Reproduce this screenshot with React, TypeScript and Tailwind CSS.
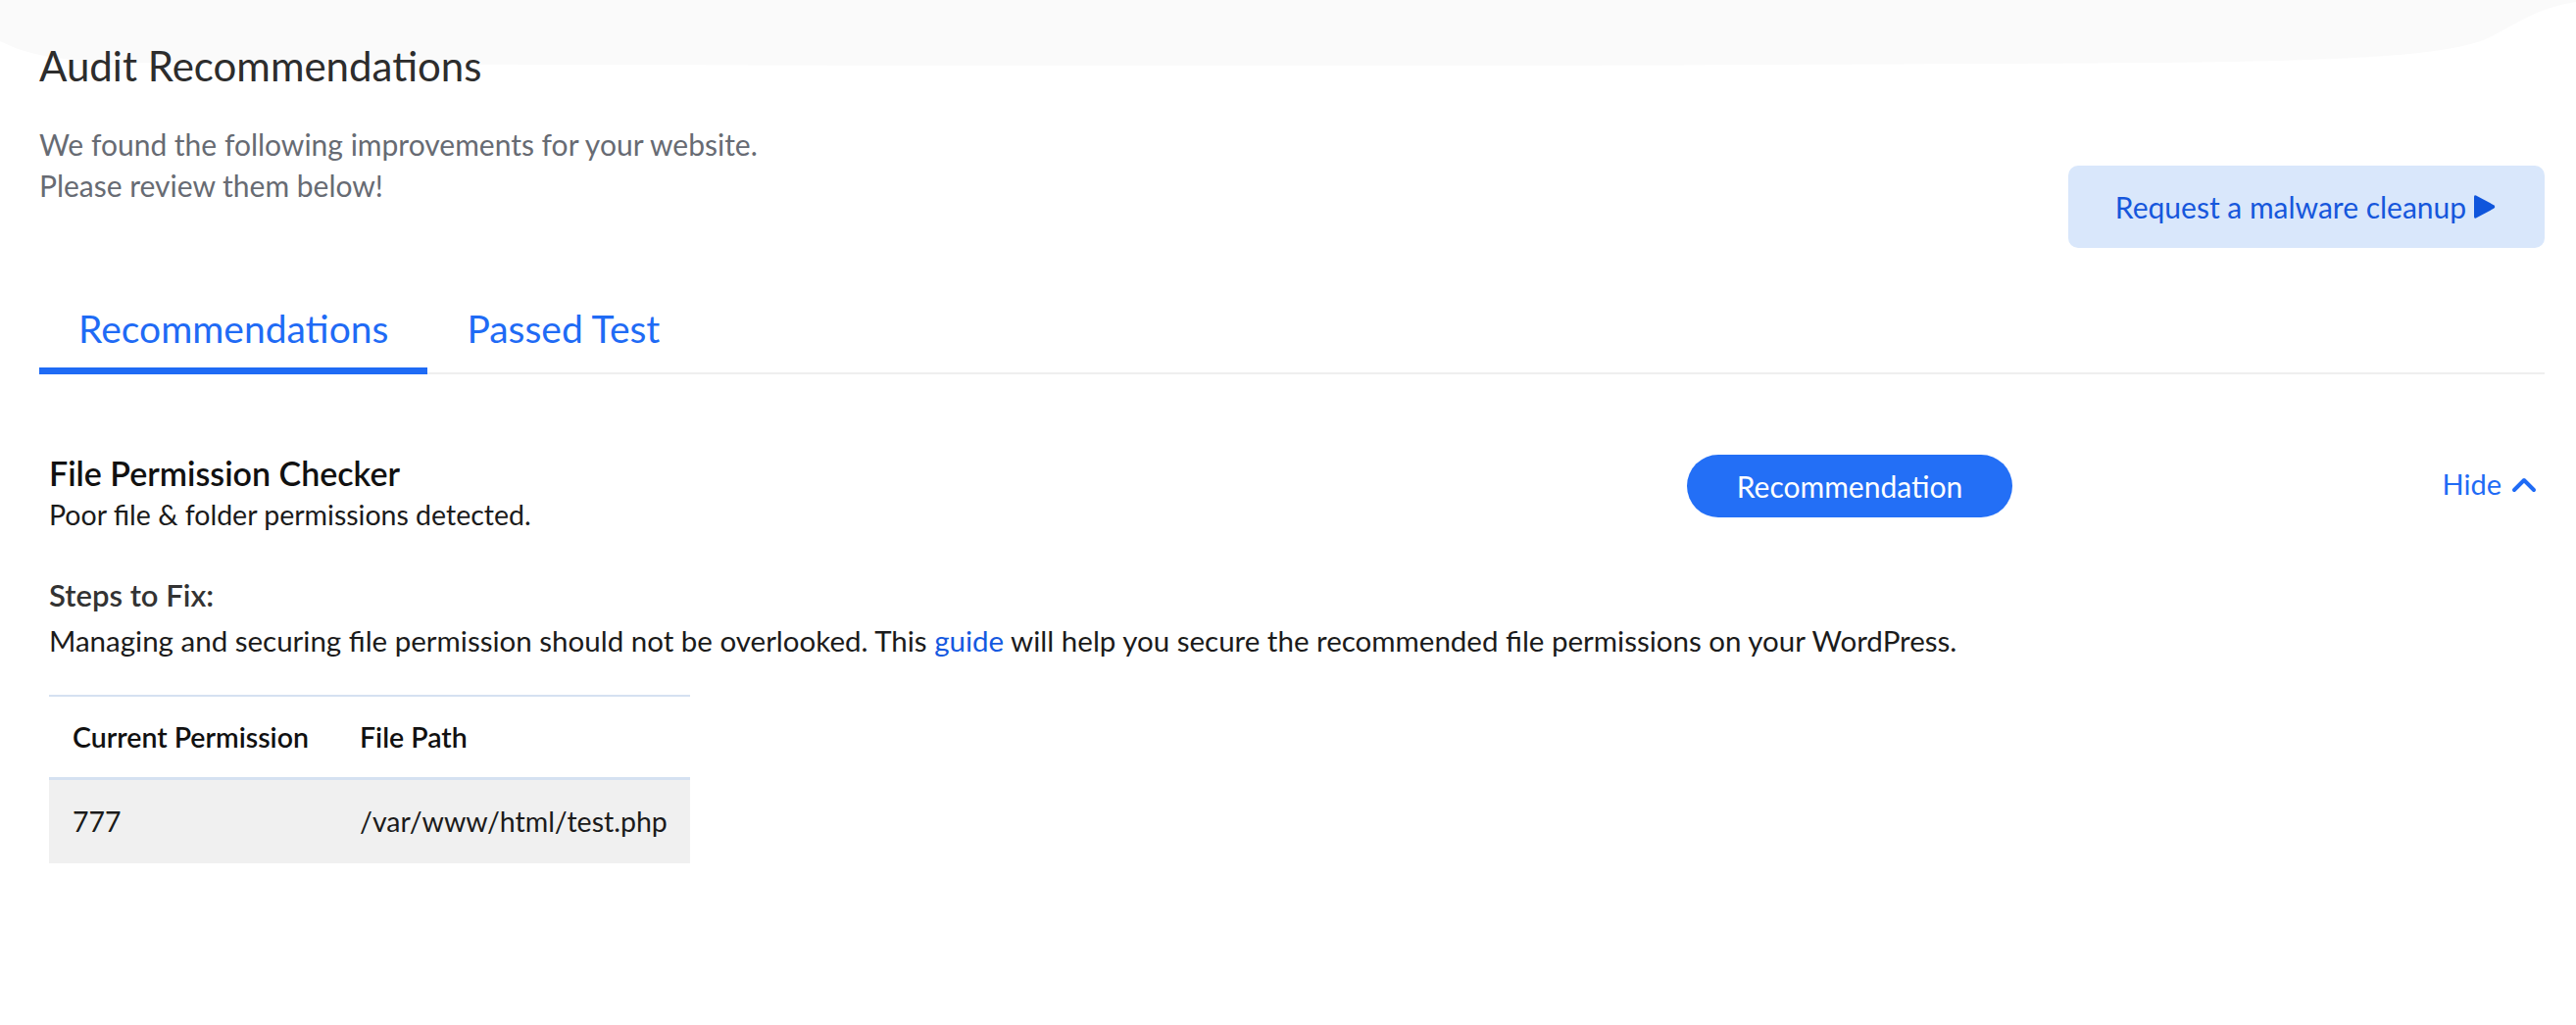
import React, { useState } from "react";

const PlayIcon = () => (
  <svg width="26" height="30" viewBox="0 0 26 30" className="ml-[6px]">
    <path d="M4 3.5 L22 13.2 Q24.5 15 22 16.8 L4 26.5 Q2 27.5 2 25 V5 Q2 2.5 4 3.5 Z" fill="#0f55dc" />
  </svg>
);

const ChevronUp = () => (
  <svg width="26" height="18" viewBox="0 0 26 18" className="ml-[10px]">
    <polyline points="3,15 13,5 23,15" fill="none" stroke="#1f6bf5" strokeWidth="4" strokeLinecap="round" strokeLinejoin="round" />
  </svg>
);

const TopWave = () => (
  <svg className="absolute left-0 top-0 pointer-events-none" width="2628" height="80" viewBox="0 0 2628 80" preserveAspectRatio="none">
    <path
      d="M0 0 H2628 V2 C2590 8 2575 20 2540 38 C2500 58 2380 62 2200 64 C1700 68 800 68 120 64 C60 62 25 55 0 42 Z"
      fill="#fafafa"
    />
  </svg>
);

const tabBase = "-mb-[2px] border-b-[7px] px-[40px] pb-[18px] text-[39px] leading-[44px] text-[#1f6bf5]";

const App = () => {
  const [tab, setTab] = useState("rec");

  return (
    <div className="relative min-h-[1046px] w-full bg-white pl-[40px] pr-[32px] font-['Lato',sans-serif]">
      <TopWave />

      <div className="relative">
        <h1 className="pt-[43px] text-[42px] leading-[48px] font-normal text-[#2d2d2d]">Audit Recommendations</h1>

        <div className="mt-[35px] flex items-start justify-between">
          <div className="text-[30px] leading-[42px] text-[#676b73]">
            <p>We found the following improvements for your website.</p>
            <p>Please review them below!</p>
          </div>
          <button className="mt-[43px] flex h-[84px] w-[486px] items-center justify-center rounded-[10px] bg-[#d9e7fb] text-[30px] text-[#1657dc]">
            Request a malware cleanup
            <PlayIcon />
          </button>
        </div>

        <div className="mt-[60px] flex border-b-2 border-[#efefef]">
          <button
            onClick={() => setTab("rec")}
            className={tab === "rec" ? tabBase + " border-[#1f6bf5]" : tabBase + " border-transparent"}
          >
            Recommendations
          </button>
          <button
            onClick={() => setTab("passed")}
            className={tab === "passed" ? tabBase + " border-[#1f6bf5]" : tabBase + " border-transparent"}
          >
            Passed Test
          </button>
        </div>

        <div className="mt-[81px] pl-[10px] pr-[8px]">
          <div className="flex items-start">
            <div className="flex-1">
              <h2 className="text-[34px] leading-[40px] font-semibold text-[#111111]">File Permission Checker</h2>
              <p className="mt-[4px] text-[28.5px] leading-[36px] text-[#1b1b1b]">Poor file &amp; folder permissions detected.</p>
            </div>
            <button className="mt-[1px] flex h-[64px] w-[332px] items-center justify-center rounded-full bg-[#236ff6] text-[30px] text-white">
              Recommendation
            </button>
            <div className="flex w-[535px] justify-end">
              <button className="mt-[13px] flex items-center text-[29px] leading-[36px] text-[#1f6bf5]">
                Hide
                <ChevronUp />
              </button>
            </div>
          </div>

          <h3 className="mt-[44px] text-[31px] leading-[40px] font-semibold text-[#333333]">Steps to Fix:</h3>
          <p className="mt-[7px] text-[29.5px] leading-[40px] text-[#1b1b1b]">
            Managing and securing file permission should not be overlooked. This{" "}
            <a href="#" className="text-[#1459e0]">guide</a> will help you secure the recommended file permissions on your WordPress.
          </p>

          <div className="mt-[35px] w-[654px] border-t-2 border-[#d5e1f1]">
            <div className="grid h-[85px] grid-cols-[293px_1fr] items-center border-b-[3px] border-[#d5e1f1] text-[28.5px] font-semibold text-[#111111]">
              <div className="px-[24px]">Current Permission</div>
              <div className="px-[24px]">File Path</div>
            </div>
            <div className="grid h-[85px] grid-cols-[293px_1fr] items-center bg-[#f0f0f0] text-[28.5px] text-[#1b1b1b]">
              <div className="px-[24px]">777</div>
              <div className="px-[24px]">/var/www/html/test.php</div>
            </div>
          </div>
        </div>
      </div>
    </div>
  );
};

export default App;
